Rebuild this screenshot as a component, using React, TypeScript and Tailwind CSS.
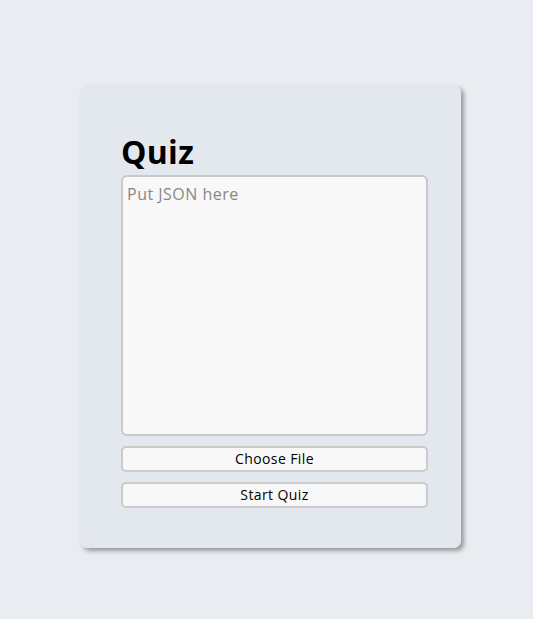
import React from "react";

export default function App() {
  return (
    <div
      className="min-h-[619px] w-full bg-[#e9edf1] pt-[85px] pl-[80px]"
      style={{ fontFamily: '"Open Sans", "Liberation Sans", sans-serif' }}
    >
      <div className="w-[381px] h-[463px] rounded-[7px] bg-[#e3e8ef] shadow-[3px_3px_4px_rgba(0,0,0,0.35)] pl-[41px] pt-[45px] flex flex-col">
        <h1 className="text-[32px] font-bold leading-[44px] text-black tracking-[0.3px]">Quiz</h1>
        <textarea
          placeholder="Put JSON here"
          className="mt-[1px] w-[307px] h-[261px] resize-none rounded-[6px] border-2 border-[#c9c9c9] bg-[#f8f8f8] px-[4px] pt-[5px] pb-[3px] text-[16px] leading-[24px] tracking-[0.5px] text-black placeholder:text-[#8d8585] outline-none"
        />
        <button className="mt-[10px] w-[307px] h-[26px] rounded-[5px] border-2 border-[#cbcbcb] bg-[#f8f8f8] text-[14px] leading-[20px] tracking-[0.4px] text-black">
          Choose File
        </button>
        <button className="mt-[10px] w-[307px] h-[26px] rounded-[5px] border-2 border-[#cbcbcb] bg-[#f8f8f8] text-[14px] leading-[20px] tracking-[0.4px] text-black">
          Start Quiz
        </button>
      </div>
    </div>
  );
}
